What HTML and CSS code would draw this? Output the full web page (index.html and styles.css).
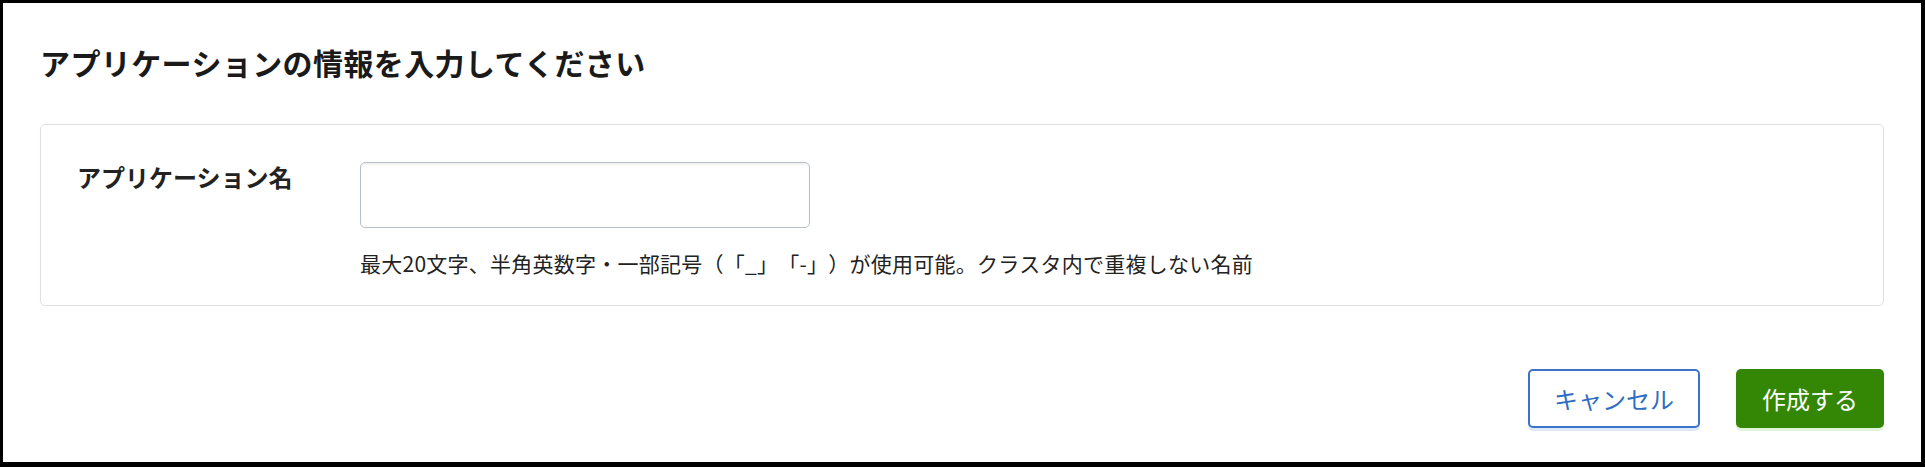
FILE: index.html
```html
<!DOCTYPE html>
<html lang="ja">
<head>
<meta charset="utf-8">
<title>アプリケーションの情報を入力してください</title>
<link rel="stylesheet" href="styles.css">
</head>
<body>
<div class="frame">
  <h1 class="title">アプリケーションの情報を入力してください</h1>
  <section class="card">
    <div class="field">
      <label class="label" for="app-name">アプリケーション名</label>
      <div class="control">
        <input id="app-name" class="input" type="text">
        <p class="help">最大20文字、半角英数字・一部記号（「_」「-」）が使用可能。クラスタ内で重複しない名前</p>
      </div>
    </div>
  </section>
  <div class="actions">
    <button class="btn btn-cancel" type="button">キャンセル</button>
    <button class="btn btn-primary" type="button">作成する</button>
  </div>
</div>
</body>
</html>
```
FILE: styles.css
```css
* { box-sizing: border-box; }
html, body {
  margin: 0;
  padding: 0;
  background: #000;
}
body {
  font-family: "Noto Sans CJK JP", "Noto Sans", sans-serif;
  color: #222;
  text-spacing-trim: space-all;
}
.frame {
  width: 1925px;
  height: 467px;
  background: #fff;
  border-style: solid;
  border-color: #000;
  border-width: 3px 4px 5px 3px;
  padding: 0 37px;
  display: flex;
  flex-direction: column;
}
.title {
  margin: 37px 0 40px;
  font-size: 30px;
  line-height: 44px;
  font-weight: 700;
  color: #1a1a1a;
  letter-spacing: 0.4px;
}
.card {
  border: 1px solid #dde1e7;
  border-radius: 5px;
  padding: 37px 36px 27px;
}
.field {
  display: flex;
}
.label {
  width: 283px;
  flex: none;
  font-size: 24px;
  line-height: 30px;
  font-weight: 700;
  color: #222;
}
.control {
  display: flex;
  flex-direction: column;
}
.input {
  width: 450px;
  height: 66px;
  border: 1px solid #b9c0cc;
  border-radius: 5px;
  box-shadow: inset 0 2px 2px rgba(0, 0, 0, 0.06);
  background: #fff;
  margin: 0;
  font: inherit;
  padding: 0 14px;
}
.help {
  margin: 20px 0 0;
  font-size: 21px;
  line-height: 30px;
  letter-spacing: 0.25px;
  color: #222;
}
.actions {
  margin-top: 63px;
  display: flex;
  justify-content: flex-end;
  gap: 36px;
}
.btn {
  height: 59px;
  border-radius: 5px;
  font-family: inherit;
  font-size: 24px;
  line-height: 1;
  padding: 0;
  cursor: pointer;
}
.btn-cancel {
  width: 172px;
  background: #fff;
  color: #2f6cc3;
  border: 2px solid #3a73c9;
  box-shadow: 0 3px 0 #dde9f8;
}
.btn-primary {
  width: 148px;
  background: #338704;
  color: #fff;
  border: none;
  box-shadow: 0 3px 0 #e2f4d8;
}
```
